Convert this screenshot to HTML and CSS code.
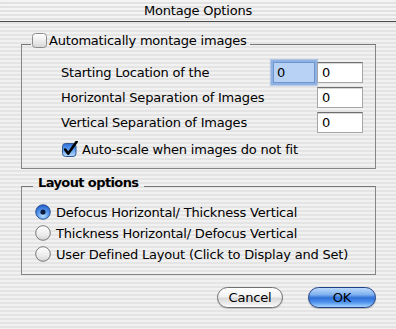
FILE: index.html
```html
<!DOCTYPE html>
<html>
<head>
<meta charset="utf-8">
<link rel="stylesheet" href="styles.css">
</head>
<body>
<div class="window">
  <div class="titlebar">Montage Options</div>
  <div class="content">
    <fieldset class="group g1">
      <legend class="legend1">
        <span class="check">
          <svg class="cb" width="15" height="15" viewBox="0 0 15 15">
            <defs>
              <linearGradient id="cbw" x1="0" y1="0" x2="0" y2="1">
                <stop offset="0" stop-color="#ffffff"/>
                <stop offset="0.5" stop-color="#eeeeee"/>
                <stop offset="1" stop-color="#d6d6d6"/>
              </linearGradient>
            </defs>
            <rect x="0.5" y="0.5" width="14" height="14" rx="3" fill="url(#cbw)" stroke="#8c8c8c"/>
          </svg>
          <span>Automatically montage images</span>
        </span>
      </legend>
      <div class="rows">
        <div class="row">
          <span class="label">Starting Location of the</span>
          <span class="field focused">0</span>
          <span class="field">0</span>
        </div>
        <div class="row">
          <span class="label">Horizontal Separation of Images</span>
          <span class="field">0</span>
        </div>
        <div class="row">
          <span class="label">Vertical Separation of Images</span>
          <span class="field">0</span>
        </div>
        <div class="row checkrow">
          <svg class="cb" width="16" height="16" viewBox="0 0 16 16">
            <defs>
              <linearGradient id="cbb" x1="0" y1="0" x2="0" y2="1">
                <stop offset="0" stop-color="#2f6fd6"/>
                <stop offset="0.45" stop-color="#5b9af0"/>
                <stop offset="1" stop-color="#b6dcff"/>
              </linearGradient>
            </defs>
            <rect x="0.5" y="2.5" width="13.5" height="13" rx="3" fill="url(#cbb)" stroke="#35588f"/>
            <path d="M3.2 8.6 L6.3 12.6 L14.6 0.8" fill="none" stroke="#000" stroke-width="2.6" stroke-linejoin="round" stroke-linecap="round"/>
          </svg>
          <span>Auto-scale when images do not fit</span>
        </div>
      </div>
    </fieldset>

    <fieldset class="group g2">
      <legend class="legend2">Layout options</legend>
      <div class="radios">
        <div class="radio">
          <svg width="16" height="16" viewBox="0 0 16 16">
            <defs>
              <radialGradient id="rb" cx="0.5" cy="0.75" r="0.7">
                <stop offset="0" stop-color="#b9e0ff"/>
                <stop offset="0.6" stop-color="#4f90ea"/>
                <stop offset="1" stop-color="#245fc9"/>
              </radialGradient>
            </defs>
            <circle cx="8" cy="8" r="7.3" fill="url(#rb)" stroke="#2a4f8c" stroke-width="0.9"/>
            <circle cx="8" cy="8" r="2.6" fill="#0d1c3f"/>
          </svg>
          <span>Defocus Horizontal/ Thickness Vertical</span>
        </div>
        <div class="radio">
          <svg width="16" height="16" viewBox="0 0 16 16">
            <defs>
              <linearGradient id="rw" x1="0" y1="0" x2="0" y2="1">
                <stop offset="0" stop-color="#ffffff"/>
                <stop offset="0.6" stop-color="#ececec"/>
                <stop offset="1" stop-color="#d4d4d4"/>
              </linearGradient>
            </defs>
            <circle cx="8" cy="8" r="7.3" fill="url(#rw)" stroke="#6c6c6c" stroke-width="0.9"/>
          </svg>
          <span>Thickness Horizontal/ Defocus Vertical</span>
        </div>
        <div class="radio">
          <svg width="16" height="16" viewBox="0 0 16 16">
            <circle cx="8" cy="8" r="7.3" fill="url(#rw)" stroke="#6c6c6c" stroke-width="0.9"/>
          </svg>
          <span>User Defined Layout (Click to Display and Set)</span>
        </div>
      </div>
    </fieldset>

    <div class="buttons">
      <span class="btn cancel">Cancel</span>
      <span class="btn ok">OK</span>
    </div>
  </div>
</div>
</body>
</html>
```

FILE: styles.css
```css
html, body {
  margin: 0;
  padding: 0;
}
body {
  width: 396px;
  height: 329px;
  overflow: hidden;
  background: #ececec;
}
.window {
  width: 396px;
  height: 329px;
  font-family: "DejaVu Sans", sans-serif;
  font-size: 13px;
  letter-spacing: -0.2px;
  color: #000;
  background: repeating-linear-gradient(to bottom, #f1f1f1 0px, #f1f1f1 2px, #e4e4e4 2px, #e4e4e4 4px);
  display: flex;
  flex-direction: column;
}
.titlebar {
  height: 21px;
  line-height: 21px;
  text-align: center;
  border-bottom: 1px solid #4a4a4a;
  border-radius: 5px 5px 0 0;
  background: repeating-linear-gradient(to bottom, #f4f4f4 0px, #f4f4f4 2px, #e2e2e2 2px, #e2e2e2 4px);
}
.content {
  display: flex;
  flex-direction: column;
  padding: 10px 20px 0 21px;
}
.group {
  margin: 0;
  padding: 0;
  width: 355px;
  box-sizing: border-box;
  border: 1px solid #858585;
  border-top-color: #767676;
  min-inline-size: 0;
}
.legend1 {
  margin-left: 9px;
  padding: 0 3px 8px 1px;
  height: 16px;
}
.check {
  display: flex;
  align-items: center;
  gap: 2px;
  height: 16px;
}
.cb {
  display: block;
  flex: none;
}
.rows {
  display: flex;
  flex-direction: column;
  gap: 4px;
  padding: 6px 12px 11px 39px;
}
.row {
  display: flex;
  align-items: center;
  height: 21px;
}
.label {
  flex: 1;
}
.field {
  width: 46px;
  height: 21px;
  box-sizing: border-box;
  background: #fff;
  border: 1px solid #a6a6a6;
  border-top-color: #6e6e6e;
  box-shadow: inset 0 1px 0 #d8d8d8;
  padding-left: 4px;
  line-height: 19px;
}
.field.focused {
  width: 42px;
  margin-right: 2px;
  background: #b8d2f6;
  border-color: #6f95cc;
  box-shadow: 0 0 0 2px #8eb2e4, 0 0 1px 3px rgba(120, 160, 220, 0.45);
  padding-left: 3px;
}
.checkrow {
  height: 16px;
  margin-top: 4px;
  gap: 4px;
  padding-left: 1px;
}
.legend2 {
  margin-left: 11px;
  padding: 0 5px 6px 5px;
  font-weight: bold;
  letter-spacing: -0.6px;
  line-height: 16px;
}
.radios {
  display: flex;
  flex-direction: column;
  gap: 5px;
  padding: 7px 0 12px 13px;
}
.radio {
  display: flex;
  align-items: center;
  gap: 5px;
  height: 16px;
}
.radio svg {
  display: block;
  flex: none;
}
.group.g2 {
  margin-top: 6px;
}
.buttons {
  display: flex;
  justify-content: flex-end;
  gap: 25px;
  margin-top: 12px;
}
.btn {
  height: 21px;
  box-sizing: border-box;
  border-radius: 11px;
  text-align: center;
  line-height: 19px;
}
.cancel {
  width: 66px;
  border: 1px solid #6f6f6f;
  background: linear-gradient(to bottom, #ffffff 0%, #f2f2f2 45%, #d9d9d9 55%, #eeeeee 85%, #ffffff 100%);
  box-shadow: 0 1px 1px rgba(0,0,0,0.2);
}
.ok {
  width: 68px;
  border: 1px solid #1d3f86;
  background: linear-gradient(to bottom, #bcd9fb 0%, #7fb1ef 35%, #2f70d8 52%, #4e92ec 75%, #a9d6ff 100%);
  box-shadow: 0 1px 1px rgba(0,0,0,0.25);
}
```
